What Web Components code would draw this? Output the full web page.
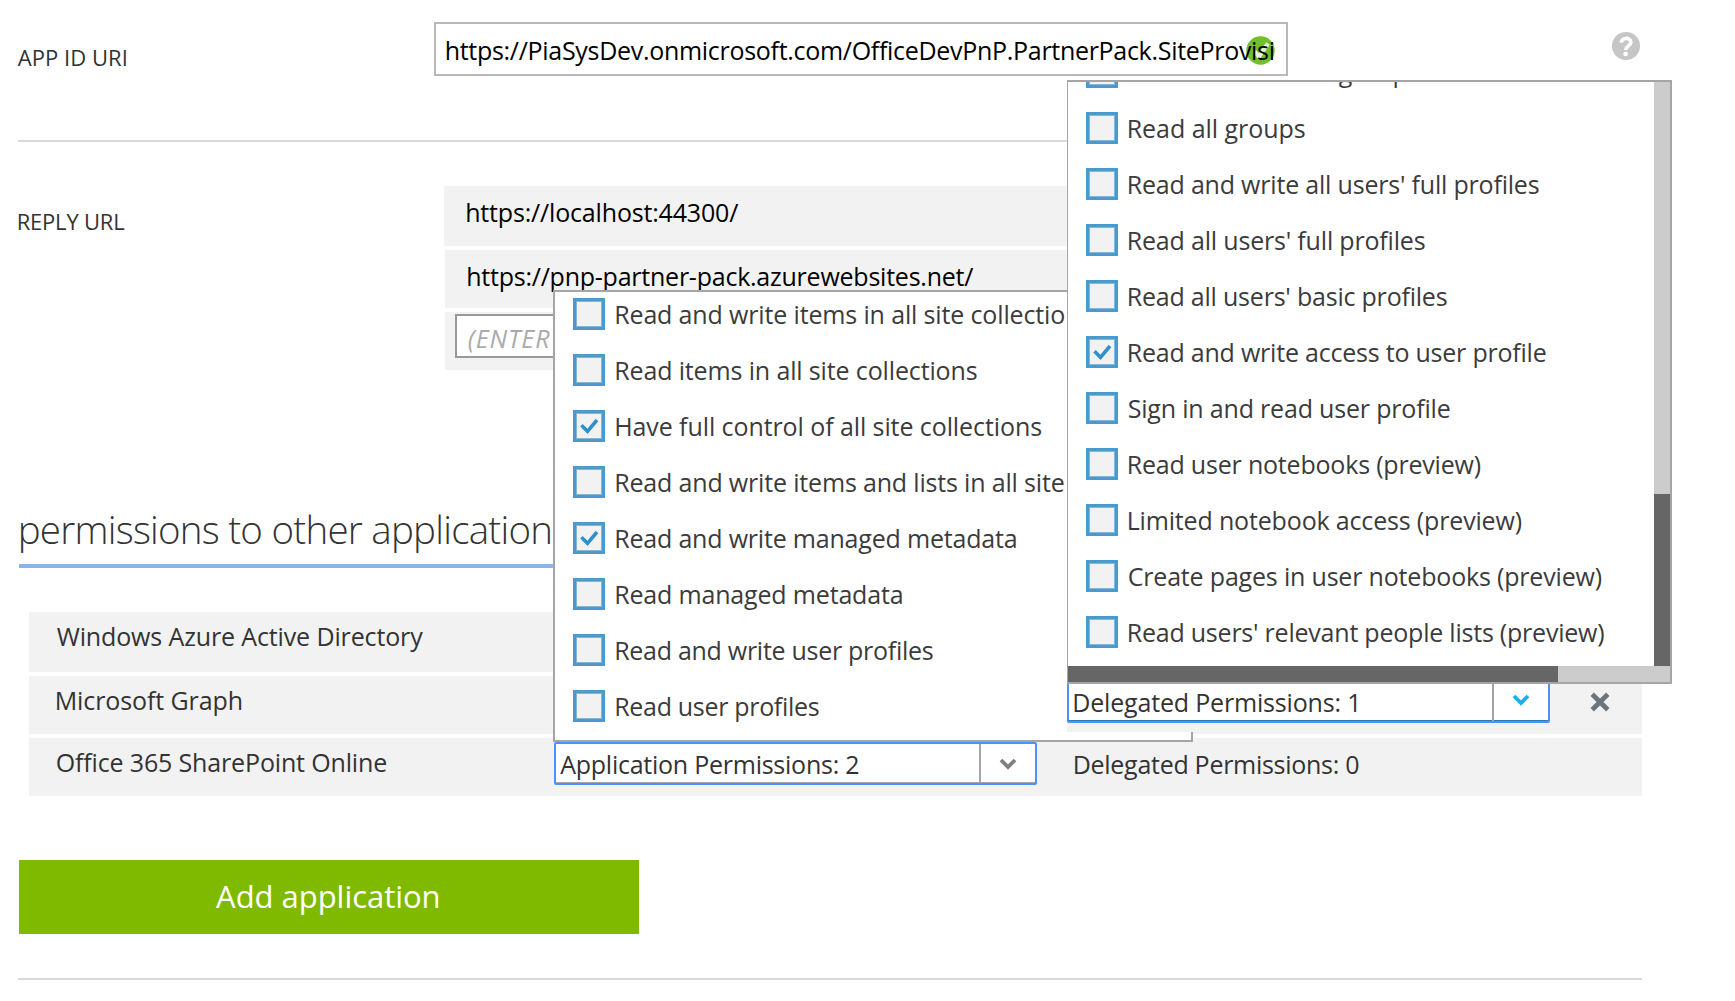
<!DOCTYPE html>
<html lang="en">
<head>
<meta charset="utf-8">
<title>Application permissions</title>
<style>
html, body { margin: 0; background: #fff; }
body { width: 1735px; height: 1001px; overflow: hidden; font-family: "Open Sans", "Noto Sans", sans-serif; color: #333; }
</style>
</head>
<body>
<permissions-page></permissions-page>
<script>
const pen = document.createElement('canvas').getContext('2d');
function define(name, html, setup) {
  const tpl = document.createElement('template');
  tpl.innerHTML = html;
  customElements.define(name, class extends HTMLElement {
    connectedCallback() {
      if (this.shadowRoot) return;
      this.attachShadow({ mode: 'open' }).appendChild(tpl.content.cloneNode(true));
      if (setup) setup(this, this.shadowRoot);
    }
  });
}

/* One line of text, tracked so that its ink spans the given width. */
define('fit-text', `<style>
  :host { display: block; white-space: pre; font-size: 25px; line-height: 36px; font-kerning: normal; }
  span { display: block; width: max-content; }
</style><span><slot></slot></span>`, (el, root) => {
  const cs = getComputedStyle(el), text = el.textContent;
  pen.font = `${cs.fontStyle} ${cs.fontWeight} ${cs.fontSize} ${cs.fontFamily}`;
  const m = pen.measureText(text);
  const ink = m.actualBoundingBoxRight + m.actualBoundingBoxLeft;
  const span = root.querySelector('span');
  span.style.letterSpacing = ((+el.getAttribute('w') - ink) / (text.length - 1)).toFixed(3) + 'px';
  span.style.marginLeft = (m.actualBoundingBoxLeft + .7).toFixed(2) + 'px';
});

define('help-icon', `<style>:host{display:block;width:28px;height:28px} svg{display:block}</style>
<svg width="28" height="28" viewBox="0 0 28 28"><circle cx="14" cy="14" r="14" fill="#c6c6c6"/>
<path d="M9.300 10.600c.3-5.600 9.600-5.400 9.600-.4 0 3.800-5.200 3.600-5.200 7.800" fill="none" stroke="#fff" stroke-width="3.600"/><circle cx="13.600" cy="21.900" r="2.300" fill="#fff"/></svg>`);

define('valid-icon', `<style>:host{display:block;width:29px;height:29px} svg{display:block}</style>
<svg width="29" height="29" viewBox="0 0 29 29"><circle cx="14.5" cy="14.5" r="14.2" fill="#70bf2b"/>
<path d="M8.500 15.500l4.500 5L22 7.500" fill="none" stroke="#e4f4d6" stroke-width="4.200"/></svg>`);

define('chevron-icon', `<style>:host{display:block;width:18px;height:12px} svg{display:block}</style>
<svg width="18" height="12" viewBox="0 0 18 12"><path d="M2 2l7 7 7-7" fill="none" stroke="currentColor" stroke-width="3.800"/></svg>`);

define('remove-icon', `<style>:host{display:block;width:22px;height:22px} svg{display:block}</style>
<svg width="22" height="22" viewBox="0 0 22 22"><path d="M3.200 3.200l15.600 15.600M18.800 3.200L3.200 18.800" fill="none" stroke="#6c757c" stroke-width="4.800"/></svg>`);

define('check-box', `<style>
  :host { display: block; width: 32px; height: 32px; box-sizing: border-box; border: 3px solid #4a9bcc; background: #f2f2f2; box-shadow: inset 0 0 0 1px #7fb8da; }
  svg { display: none; }
  :host([checked]) svg { display: block; }
</style><svg width="26" height="26" viewBox="0 0 26 26"><path d="M5.500 12.300l6 6L21 7" fill="none" stroke="#2f91c9" stroke-width="3.500"/></svg>`);

define('perm-option', `<style>
  :host { display: flex; height: 56px; align-items: flex-start; gap: 10.500px; color: #3b3b3b; }
  fit-text { margin-top: -2px; }
</style><check-box></check-box>`, (el, root) => {
  if (el.hasAttribute('checked')) root.querySelector('check-box').setAttribute('checked', '');
  const t = document.createElement('fit-text');
  t.textContent = el.textContent;
  t.setAttribute('w', el.getAttribute('w'));
  root.appendChild(t);
});

define('app-popup', `<style>
  :host { display: block; box-sizing: border-box; width: 640px; height: 452px; border: 2px solid #a5a5a5; background: #fff; overflow: hidden; padding: 6px 0 0 18px; }
</style><slot></slot>`);

define('graph-popup', `<style>
  :host { display: grid; grid-template-columns: 1fr 16px; grid-template-rows: 1fr 16px; box-sizing: border-box; width: 605px; height: 604px; border: 2px solid #a5a5a5; border-left-width: 1px; background: #fff; }
  .list { overflow: hidden; padding-left: 18px; min-height: 0; }
  .list div { margin-top: -26px; }
  ::slotted(perm-option) { gap: 10px; }
  .v { background: #ccc; display: flex; flex-direction: column; justify-content: flex-end; }
  .v i { height: 172px; background: #666; }
  .h { grid-column: 1 / 3; background: #ccc; display: flex; }
  .h i { width: 490px; background: #666; }
</style><div class="list"><div><slot></slot></div></div><div class="v"><i></i></div><div class="h"><i></i></div>`);

define('drop-down', `<style>
  :host { display: flex; box-sizing: border-box; background: #fff; border: 2px solid #4d90fe; border-radius: 2px; box-shadow: inset 0 -1px 0 var(--edge, #a5a5a5); }
  .value { flex: 1; border-right: 2px solid #a5a5a5; padding-left: 4.500px; }
  .arrow { width: 54px; padding-right: 1px; box-sizing: border-box; display: flex; align-items: center; justify-content: center; color: var(--arrow, #808080); }
</style><div class="value"><slot></slot></div><div class="arrow"><chevron-icon></chevron-icon></div>`);

define('section-line', `<style>:host{display:block;height:2px;width:1624px;margin-left:18px;background:#d9d9d9}</style>`);

define('action-button', `<style>
  :host { display: flex; box-sizing: border-box; width: 620px; height: 74px; padding: 0 2px 2px 0; background: #80ba00; color: #fff; justify-content: center; align-items: center; }
</style><slot></slot>`);

define('permissions-page', `<style>
  :host { display: block; position: relative; width: 1735px; height: 1001px; background: #fff; overflow: hidden; }
  .label fit-text { font-size: 22px; line-height: 32px; font-weight: 450; }
  .uri { display: flex; height: 140px; box-sizing: border-box; padding: 22px 0 0 17px; align-items: flex-start; }
  .uri .label { width: 417px; padding-top: 19px; }
  .uri .field { position: relative; box-sizing: border-box; width: 854px; height: 54px; border: 2px solid #b8b8b8; color: #000; padding: 8px 0 0 10px; }
  .field valid-icon { position: absolute; left: 810px; top: 11.500px; }
  .field fit-text { position: relative; }
  .uri help-icon { margin: 10px 0 0 324px; }
  .reply { display: flex; padding: 44px 0 0 18px; }
  .reply .label { width: 427px; padding-top: 19px; }
  .urls { display: flex; flex-direction: column; gap: 4px; width: 1197px; }
  .urls div { background: #f2f2f2; box-sizing: border-box; color: #000; padding-left: 22.500px; height: 58px; padding-top: 8px; }
  .urls .first { height: 60px; margin-left: -1px; }
  .urls .entry { padding: 2px 10px 0; }
  .urls .entry span { display: block; box-sizing: border-box; height: 44px; border: 2px solid #999; background: #fff; padding: 4px 0 0 10px; color: #aaa; font-style: italic; }
  .title { padding: 132px 0 0 20px; height: 62px; }
  .title fit-text { font-size: 38.500px; line-height: 54px; font-weight: 300; }
  .rule { margin-left: 19px; width: 1623px; height: 4px; background: #85b7e2; }
  .apps { display: flex; flex-direction: column; gap: 4px; margin: 44px 0 64px 29px; width: 1613px; }
  .row { display: grid; grid-template-columns: 524px 514px 1fr; height: 58px; background: #f2f2f2; align-items: start; }
  .row.tall { height: 60px; }
  .name { padding: 6px 0 0 27px; }
  .row drop-down { width: 483px; height: 43px; margin: 4px 0 0 1px; }
  .row > drop-down fit-text { margin-top: 2px; margin-left: -1px; }
  .row .over { position: relative; z-index: 2; height: 56px; background: #f2f2f2; display: flex; --edge: #2a7fb0; }
  .row .over drop-down { margin: 0; height: 47px; --arrow: #1ab0ef; }
  .over drop-down fit-text { margin-top: 6px; }
  .row remove-icon { margin: 15px 0 0 39px; }
  .plain { padding: 8px 0 0 7px; }
  action-button { margin: 0 0 44px 19px; }
  action-button fit-text { font-size: 31px; line-height: 44px; }
  app-popup { position: absolute; z-index: 1; left: 553px; top: 290px; }
  graph-popup { position: absolute; z-index: 3; left: 1067px; top: 80px; }
</style>
<div class="uri">
  <div class="label"><fit-text w="108">APP ID URI</fit-text></div>
  <div class="field"><valid-icon></valid-icon><fit-text w="827">https://PiaSysDev.onmicrosoft.com/OfficeDevPnP.PartnerPack.SiteProvisi</fit-text></div>
  <help-icon></help-icon>
</div>
<section-line></section-line>
<div class="reply">
  <div class="label"><fit-text w="105.500">REPLY URL</fit-text></div>
  <div class="urls">
    <div class="first"><fit-text w="271">https://localhost:44300/</fit-text></div>
    <div><fit-text w="505">https://pnp-partner-pack.azurewebsites.net/</fit-text></div>
    <div class="entry"><span><fit-text w="82.500">(ENTER</fit-text></span></div>
  </div>
</div>
<div class="title"><fit-text w="529.500">permissions to other application</fit-text></div>
<div class="rule"></div>
<div class="apps">
  <div class="row tall"><div class="name"><fit-text w="366.500">Windows Azure Active Directory</fit-text></div></div>
  <div class="row">
    <div class="name"><fit-text w="185">Microsoft Graph</fit-text></div><div></div>
    <div class="over"><drop-down><fit-text w="282">Delegated Permissions: 1</fit-text></drop-down><remove-icon></remove-icon></div>
  </div>
  <div class="row">
    <div class="name"><fit-text w="329.500">Office 365 SharePoint Online</fit-text></div>
    <drop-down><fit-text w="298">Application Permissions: 2</fit-text></drop-down>
    <div class="plain"><fit-text w="284.500">Delegated Permissions: 0</fit-text></div>
  </div>
</div>
<action-button><fit-text w="222.500">Add application</fit-text></action-button>
<section-line></section-line>
<app-popup>
  <perm-option w="448">Read and write items in all site collectio</perm-option>
  <perm-option w="360.500">Read items in all site collections</perm-option>
  <perm-option w="425" checked>Have full control of all site collections</perm-option>
  <perm-option w="447.500">Read and write items and lists in all site</perm-option>
  <perm-option w="399.500" checked>Read and write managed metadata</perm-option>
  <perm-option w="285.500">Read managed metadata</perm-option>
  <perm-option w="316.500">Read and write user profiles</perm-option>
  <perm-option w="202.500">Read user profiles</perm-option>
</app-popup>
<graph-popup>
  <perm-option w="290">Read and write all groups</perm-option>
  <perm-option w="176">Read all groups</perm-option>
  <perm-option w="410">Read and write all users' full profiles</perm-option>
  <perm-option w="296">Read all users' full profiles</perm-option>
  <perm-option w="318">Read all users' basic profiles</perm-option>
  <perm-option w="417" checked>Read and write access to user profile</perm-option>
  <perm-option w="321">Sign in and read user profile</perm-option>
  <perm-option w="352">Read user notebooks (preview)</perm-option>
  <perm-option w="393">Limited notebook access (preview)</perm-option>
  <perm-option w="473">Create pages in user notebooks (preview)</perm-option>
  <perm-option w="475.500">Read users' relevant people lists (preview)</perm-option>
</graph-popup>`);
</script>
</body>
</html>
